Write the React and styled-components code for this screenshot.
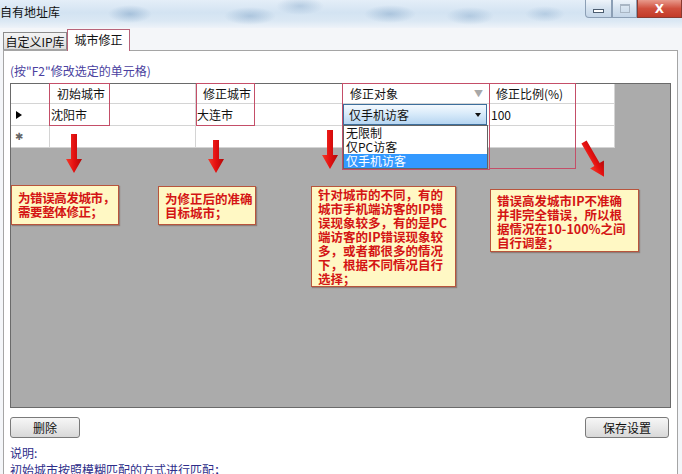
import React from 'react';
import styled, { createGlobalStyle } from 'styled-components';

const GlobalStyle = createGlobalStyle`
  html, body { margin: 0; padding: 0; background: #fff; }
  body {
    font-family: "Noto Sans CJK SC", "Liberation Sans", sans-serif;
    font-size: 12px;
    color: #111;
  }
  * { box-sizing: border-box; }
`;

const Window = styled.div`
  width: 682px;
  height: 474px;
  overflow: hidden;
  display: flex;
  flex-direction: column;
  background: #f4f6f9;
`;

const TitleBar = styled.div`
  flex-shrink: 0;
  height: 28px;
  display: flex;
  align-items: flex-start;
  background:
    radial-gradient(ellipse 22px 9px at 130px 14px, rgba(110,150,190,0.45), transparent),
    radial-gradient(ellipse 26px 9px at 250px 16px, rgba(110,150,190,0.4), transparent),
    radial-gradient(ellipse 24px 9px at 300px 6px, rgba(110,150,190,0.35), transparent),
    radial-gradient(ellipse 26px 9px at 390px 14px, rgba(110,150,190,0.4), transparent),
    radial-gradient(ellipse 24px 9px at 470px 16px, rgba(110,150,190,0.35), transparent),
    radial-gradient(ellipse 20px 8px at 545px 14px, rgba(110,150,190,0.3), transparent),
    linear-gradient(180deg, #e4eef8 0%, #d3e3f2 45%, #dbe8f4 75%, #eef3f9 100%);
`;

const Title = styled.div`
  padding-top: 4px;
  line-height: 16px;
  font-size: 12px;
  color: #111;
`;

const Controls = styled.div`
  margin-left: auto;
  display: flex;
  height: 18px;
`;

const CtrlButton = styled.div`
  width: ${p => p.$w}px;
  height: 18px;
  display: flex;
  align-items: center;
  justify-content: center;
  border: 1px solid ${p => (p.$close ? '#8a3a30' : '#8c9fb5')};
  border-top: none;
  border-radius: ${p => p.$r || '0'};
  background: ${p =>
    p.$close
      ? 'linear-gradient(180deg, #e89a8c 0%, #d0503e 50%, #c23a28 100%)'
      : 'linear-gradient(180deg, #eef4fa 0%, #d5e2ef 50%, #c5d6e8 100%)'};
  color: #fff;
  font-family: "DejaVu Sans", sans-serif;
  font-weight: bold;
  font-size: 12px;
`;

const MinGlyph = styled.div`
  width: 11px;
  height: 4px;
  border: 1px solid #4c5d70;
  background: #fff;
  margin-top: 4px;
`;

const MaxGlyph = styled.div`
  width: 10px;
  height: 9px;
  border: 1px solid #a9b6c4;
  border-top-width: 2px;
`;

const TabStrip = styled.div`
  flex-shrink: 0;
  height: 22px;
  display: flex;
  align-items: flex-end;
  padding-left: 3px;
`;

const Tab = styled.div`
  position: relative;
  top: ${p => (p.$active ? '1px' : '0')};
  z-index: ${p => (p.$active ? 2 : 1)};
  width: ${p => p.$w}px;
  height: ${p => (p.$active ? 22 : 18)}px;
  display: flex;
  align-items: center;
  justify-content: center;
  font-size: 12px;
  border: 1px solid ${p => (p.$active ? '#b8647a' : '#8c8c8c')};
  border-bottom: ${p => (p.$active ? 'none' : '1px solid #a5a5a5')};
  background: ${p => (p.$active ? '#fff' : 'linear-gradient(180deg, #f4f4f4, #dedede)')};
  padding-bottom: ${p => (p.$active ? '2px' : '0')};
`;

const Panel = styled.div`
  flex: 1;
  min-height: 0;
  overflow: hidden;
  margin: 0 4px 0 3px;
  border: 1px solid #a5a5a5;
  border-bottom: none;
  background: #fff;
  padding-left: 6px;
  display: flex;
  flex-direction: column;
`;

const Hint = styled.div`
  flex-shrink: 0;
  margin-top: 12px;
  line-height: 16px;
  color: #4a3fa0;
  font-size: 12px;
`;

const GridBox = styled.div`
  flex-shrink: 0;
  position: relative;
  margin-top: 4px;
  width: 661px;
  height: 325px;
  border: 1px solid #6a6a6a;
  background: #ababab;
`;

const Row = styled.div`
  display: flex;
  height: ${p => p.$h}px;
  width: 604px;
  background: #fff;
`;

const Cell = styled.div`
  width: ${p => p.$w}px;
  flex-shrink: 0;
  height: 100%;
  display: flex;
  align-items: center;
  justify-content: ${p => (p.$spread ? 'space-between' : 'flex-start')};
  padding-left: ${p => p.$pad ?? 1}px;
  padding-right: ${p => (p.$spread ? 6 : 0)}px;
  border-right: 1px solid #d4d4d4;
  border-bottom: 1px solid #d4d4d4;
  font-size: 12px;
  color: #111;
`;

const SortMark = styled.span`
  color: #a8a8a8;
  font-size: 9px;
`;

const RowPointer = styled.div`
  width: 0;
  height: 0;
  margin-left: 5px;
  border-left: 6px solid #000;
  border-top: 4.5px solid transparent;
  border-bottom: 4.5px solid transparent;
`;

const NewRowMark = styled.span`
  margin-left: 4px;
  font-family: "DejaVu Sans", sans-serif;
  font-size: 10px;
  color: #666;
`;

const Combo = styled.div`
  width: 144px;
  height: 21px;
  display: flex;
  align-items: center;
  justify-content: space-between;
  padding: 0 5px;
  border: 1px solid #3d6f9c;
  background: linear-gradient(180deg, #f4f9fe 0%, #d9ebfa 45%, #b6d5f1 100%);
  color: #111;
`;

const ComboArrow = styled.span`
  width: 0;
  height: 0;
  border-top: 4px solid #111;
  border-left: 3.5px solid transparent;
  border-right: 3.5px solid transparent;
`;

const DropList = styled.div`
  position: absolute;
  left: 332px;
  top: 41px;
  width: 145px;
  height: 44px;
  border: 1px solid #646464;
  background: #fff;
  z-index: 3;
`;

const DropItem = styled.div`
  height: 14px;
  line-height: 14px;
  padding-left: 2px;
  font-size: 12px;
  background: ${p => (p.$selected ? '#3399ff' : 'transparent')};
  color: ${p => (p.$selected ? '#fff' : '#111')};
`;

const Mark = styled.div`
  position: absolute;
  left: ${p => p.$x}px;
  top: ${p => p.$y}px;
  width: ${p => p.$w}px;
  height: ${p => p.$h}px;
  border: 1.5px solid #c44e68;
  z-index: 4;
  pointer-events: none;
`;

const ArrowWrap = styled.svg`
  position: absolute;
  left: ${p => p.$x}px;
  top: ${p => p.$y}px;
  transform: rotate(${p => p.$rot || 0}deg);
  transform-origin: 50% 0;
  z-index: 4;
  overflow: visible;
`;

const Note = styled.div`
  position: absolute;
  left: ${p => p.$x}px;
  top: ${p => p.$y}px;
  width: ${p => p.$w}px;
  height: ${p => p.$h}px;
  padding: ${p => p.$pt}px 0 0 6px;
  background: #fff8c4;
  border: 1px solid #b8543c;
  box-shadow: 1px 1px 1px rgba(90, 40, 30, 0.35);
  color: #d41414;
  font-weight: bold;
  font-size: 12.5px;
  line-height: 14px;
  white-space: nowrap;
  letter-spacing: ${p => p.$ls || 0}px;
  z-index: 4;
`;

const ButtonRow = styled.div`
  flex-shrink: 0;
  display: flex;
  justify-content: space-between;
  margin-top: 9px;
  padding-right: 8px;
`;

const Button = styled.div`
  width: ${p => p.$w}px;
  height: 21px;
  display: flex;
  align-items: center;
  justify-content: center;
  border: 1px solid #7a7a7a;
  border-radius: 3px;
  background: linear-gradient(180deg, #f6f6f6 0%, #e8e8e8 50%, #d8d8d8 100%);
  font-size: 12px;
  color: #111;
`;

const Notes = styled.div`
  flex-shrink: 0;
  margin-top: 6px;
  color: #2e2e8a;
  font-size: 12px;
  line-height: 17px;
`;

function Arrow({ x, y, h, rot }) {
  const id = `ag${x}${y}`;
  return (
    <ArrowWrap $x={x} $y={y} $rot={rot} width="16" height={h} viewBox={`0 0 16 ${h}`}>
      <defs>
        <linearGradient id={id} x1="0" y1="0" x2="1" y2="0">
          <stop offset="0" stopColor="#f43a2a" />
          <stop offset="0.5" stopColor="#e41010" />
          <stop offset="1" stopColor="#b00808" />
        </linearGradient>
      </defs>
      <polygon
        points={`5,0 11,0 11,${h - 14} 16,${h - 14} 8,${h} 0,${h - 14} 5,${h - 14}`}
        fill={`url(#${id})`}
      />
    </ArrowWrap>
  );
}

const widths = [39, 146, 147, 147, 125];

export default function App() {
  return (
    <Window>
      <GlobalStyle />
      <TitleBar>
        <Title>自有地址库</Title>
        <Controls>
          <CtrlButton $w={27} $r="0 0 0 4px"><MinGlyph /></CtrlButton>
          <CtrlButton $w={25}><MaxGlyph /></CtrlButton>
          <CtrlButton $w={45} $close>X</CtrlButton>
        </Controls>
      </TitleBar>

      <TabStrip>
        <Tab $w={64}>自定义IP库</Tab>
        <Tab $w={63} $active>城市修正</Tab>
      </TabStrip>

      <Panel>
        <Hint>(按"F2"修改选定的单元格)</Hint>

        <GridBox>
          <Row $h={20}>
            <Cell $w={widths[0]} />
            <Cell $w={widths[1]} $pad={7}>初始城市</Cell>
            <Cell $w={widths[2]} $pad={7}>修正城市</Cell>
            <Cell $w={widths[3]} $pad={7} $spread>修正对象<SortMark>▼</SortMark></Cell>
            <Cell $w={widths[4]} $pad={6}>修正比例(%)</Cell>
          </Row>
          <Row $h={22}>
            <Cell $w={widths[0]} $pad={0}><RowPointer /></Cell>
            <Cell $w={widths[1]}>沈阳市</Cell>
            <Cell $w={widths[2]}>大连市</Cell>
            <Cell $w={widths[3]} $pad={0}>
              <Combo>仅手机访客<ComboArrow /></Combo>
            </Cell>
            <Cell $w={widths[4]}>100</Cell>
          </Row>
          <Row $h={22}>
            <Cell $w={widths[0]} $pad={0}><NewRowMark>✱</NewRowMark></Cell>
            <Cell $w={widths[1]} />
            <Cell $w={widths[2]} />
            <Cell $w={widths[3]} />
            <Cell $w={widths[4]} />
          </Row>

          <DropList>
            <DropItem>无限制</DropItem>
            <DropItem>仅PC访客</DropItem>
            <DropItem $selected>仅手机访客</DropItem>
          </DropList>

          <Mark $x={38} $y={-1} $w={61} $h={43} />
          <Mark $x={185} $y={-1} $w={59} $h={43} />
          <Mark $x={331} $y={-1} $w={148} $h={87} />
          <Mark $x={478} $y={-1} $w={87} $h={86} />

          <Arrow x={55} y={50} h={39} />
          <Arrow x={197} y={56} h={33} />
          <Arrow x={311} y={46} h={39} />
          <Arrow x={565} y={58} h={40} rot={-30} />

          <Note $x={0} $y={101} $w={108} $h={40} $pt={5} $ls={-0.4}>
            为错误高发城市，<br />需要整体修正；
          </Note>
          <Note $x={147} $y={102} $w={98} $h={39} $pt={5}>
            为修正后的准确<br />目标城市；
          </Note>
          <Note $x={300} $y={102} $w={145} $h={101} $pt={1}>
            针对城市的不同，有的<br />
            城市手机端访客的IP错<br />
            误现象较多，有的是PC<br />
            端访客的IP错误现象较<br />
            多，或者都很多的情况<br />
            下，根据不同情况自行<br />
            选择；
          </Note>
          <Note $x={479} $y={105} $w={149} $h={63} $pt={4}>
            错误高发城市IP不准确<br />
            并非完全错误，所以根<br />
            据情况在10-100%之间<br />
            自行调整；
          </Note>
        </GridBox>

        <ButtonRow>
          <Button $w={70}>删除</Button>
          <Button $w={84}>保存设置</Button>
        </ButtonRow>

        <Notes>
          说明:<br />
          初始城市按照模糊匹配的方式进行匹配；
        </Notes>
      </Panel>
    </Window>
  );
}
